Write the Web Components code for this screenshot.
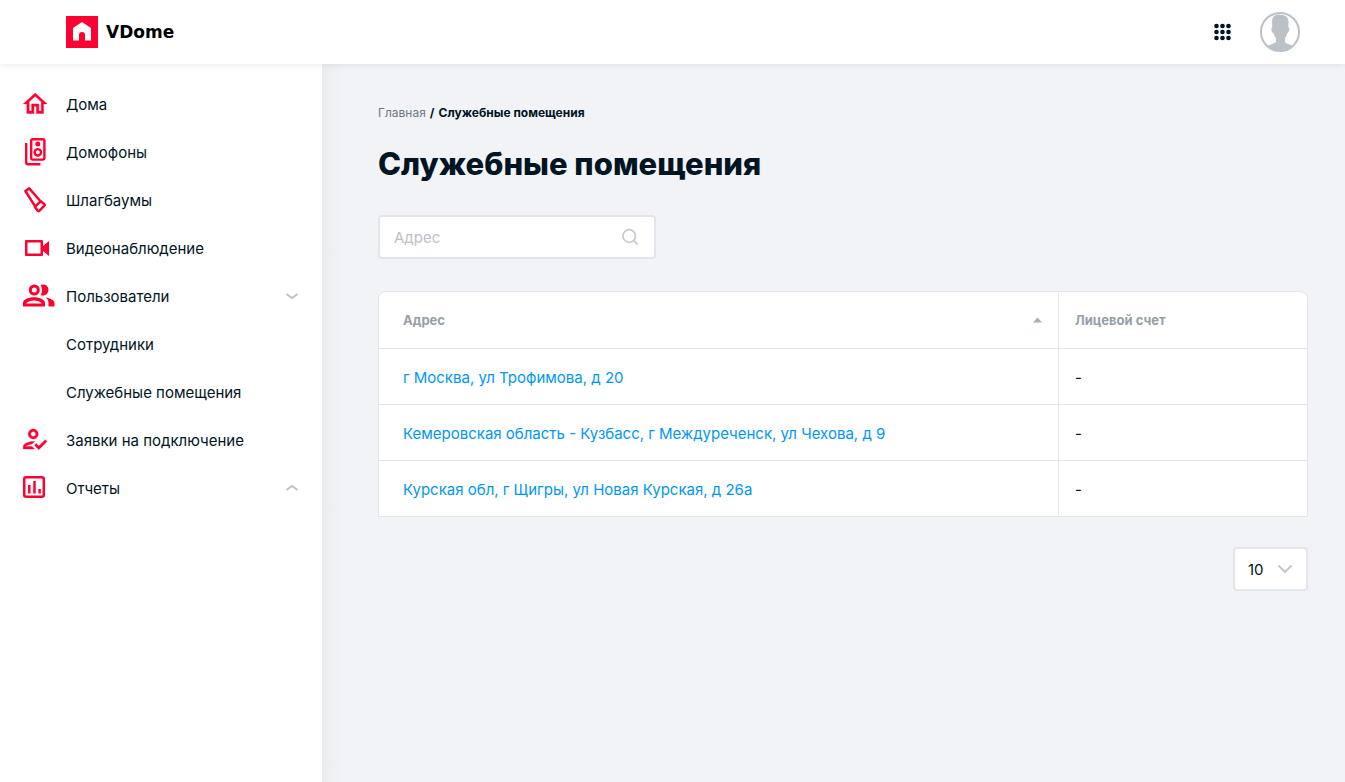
<!DOCTYPE html>
<html lang="ru">
<head>
<meta charset="utf-8">
<meta name="viewport" content="width=device-width, initial-scale=1">
<title>VDome — Служебные помещения</title>
<style>
  html { height: 100%; }
  body {
    margin: 0;
    min-height: 100%;
    display: flex;
    flex-direction: column;
    font-family: Inter, Roboto, sans-serif;
    font-size: 15px;
    line-height: 24px;
    color: #001424;
    --brand: #ff0032;
    --link: #0097f5;
    --line: #e2e5eb;
    --muted: #969fa8;
    --icon: #bbc1c7;
    background: #f1f3f7;
  }
</style>
</head>
<body>
<vd-app>
  <vd-header slot="header"></vd-header>
  <vd-sidebar slot="sidebar">
    <vd-nav-item label="Дома">
      <svg slot="icon" viewBox="0 0 32 32" width="32" height="32" fill="#ff0032" stroke="#ff0032" stroke-width=".3"><path transform="translate(-1.200 1.500) scale(1.200)" d="M12 5.69l5 4.5V18h-2v-6H9v6H7v-7.81l5-4.5M12 3L2 12h3v8h6v-6h2v6h6v-8h3L12 3z"/></svg>
    </vd-nav-item>
    <vd-nav-item label="Домофоны">
      <svg slot="icon" viewBox="0 0 32 32" width="32" height="32" fill="none" stroke="#ff0032" stroke-width="2.4"><rect x="9.2" y="3.2" width="13.2" height="20.4" rx="1.6"/><circle cx="15.8" cy="8" r="2.5" fill="#ff0032" stroke="none"/><circle cx="15.8" cy="16.3" r="3.2"/><path d="M4.2 7v19.6a1.6 1.6 0 0 0 1.6 1.6H18.4"/></svg>
    </vd-nav-item>
    <vd-nav-item label="Шлагбаумы">
      <svg slot="icon" viewBox="0 0 32 32" width="32" height="32" fill="none" stroke="#ff0032" stroke-width="2.5" stroke-linejoin="round"><path d="M18.3 17L7.2 4.4 3.4 7 13 22.2"/><path d="M12.9 22.8l5.9-5.6 3.7 3.2q.5.6 0 1.2l-5 5q-1.200.8-2 0z"/></svg>
    </vd-nav-item>
    <vd-nav-item label="Видеонаблюдение">
      <svg slot="icon" viewBox="0 0 32 32" width="32" height="32" fill="#ff0032"><path fill-rule="evenodd" d="M4 8h16q1 0 1 1v5l6-5v15l-6-5v4q0 1-1 1H4q-1 0-1-1V9q0-1 1-1zm1.500 2.500v11h13v-11z"/></svg>
    </vd-nav-item>
    <vd-nav-item label="Пользователи" toggle="down">
      <svg slot="icon" viewBox="0 0 34 32" width="34" height="32" fill="#ff0032"><circle cx="12.300" cy="10" r="4" fill="none" stroke="#ff0032" stroke-width="3"/><path d="M18.500 4.700q7.500-1.200 8 5.300-.5 6.500-8 5.300 3.300-5.300 0-10.600z"/><path fill-rule="evenodd" d="M1 26.500v-3.500c0-4 7-5.700 11-5.700s11 1.700 11 5.700v3.500zm3.200-3h15.600c-1.400-1.700-4.800-3-7.800-3s-6.400 1.300-7.800 3z"/><path d="M23.500 17.600c4.500.7 9 2.500 9 5.400v3.500h-6V23c0-2.300-1-4-3-5.400z"/></svg>
    </vd-nav-item>
    <vd-nav-item label="Сотрудники"></vd-nav-item>
    <vd-nav-item label="Служебные помещения"></vd-nav-item>
    <vd-nav-item label="Заявки на подключение">
      <svg slot="icon" viewBox="0 0 32 32" width="32" height="32" fill="#ff0032" stroke="#ff0032" stroke-width=".3"><path transform="translate(-2.500 0) scale(1.250)" d="M11 12c2.210 0 4-1.790 4-4s-1.790-4-4-4-4 1.790-4 4 1.790 4 4 4zm0-6c1.100 0 2 .9 2 2s-.9 2-2 2-2-.9-2-2 .9-2 2-2zM5 18c.2-.63 2.570-1.680 4.960-1.940l2.040-2c-.39-.04-.68-.06-1-.06-2.670 0-8 1.340-8 4v2h9l-2-2H5zm15.600-5.500l-5.130 5.170-2.070-2.080L12 17l3.470 3.500L22 13.910z"/></svg>
    </vd-nav-item>
    <vd-nav-item label="Отчеты" toggle="up">
      <svg slot="icon" viewBox="0 0 32 32" width="32" height="32" fill="none" stroke="#ff0032" stroke-width="2.500"><rect x="2.200" y="5.200" width="19.600" height="19.600" rx="2"/><path d="M7.300 13v8.600M12.500 9v12.600M17.600 17v4.600"/></svg>
    </vd-nav-item>
  </vd-sidebar>
  <vd-breadcrumbs></vd-breadcrumbs>
  <vd-title>Служебные помещения</vd-title>
  <vd-search></vd-search>
  <vd-table></vd-table>
  <vd-page-size></vd-page-size>
</vd-app>

<script>
const define = (name, html, setup) => {
  const tpl = document.createElement('template');
  tpl.innerHTML = html;
  customElements.define(name, class extends HTMLElement {
    constructor() {
      super();
      this.attachShadow({ mode: 'open' }).append(tpl.content.cloneNode(true));
    }
    connectedCallback() { if (setup) setup(this, this.shadowRoot); }
  });
};

define('vd-app', `
  <style>
    :host { display: flex; flex-direction: column; flex: 1; }
    .body { display: flex; flex: 1; }
    main {
      flex: 1; min-width: 0; box-sizing: border-box;
      padding: 41px 37px 40px 56px;
      display: flex; flex-direction: column; align-items: flex-start;
      background: linear-gradient(90deg, #e9ecf1, #f1f3f7 20px);
    }
  </style>
  <slot name="header"></slot>
  <div class="body"><slot name="sidebar"></slot><main><slot></slot></main></div>`);

define('vd-header', `
  <style>
    :host {
      display: flex; align-items: center; justify-content: space-between;
      height: 64px; padding: 0 45px 0 66px; background: #fff; position: relative;
      box-shadow: 0 0 8px rgba(0, 20, 36, .1);
    }
    a { display: flex; align-items: center; gap: 8px; color: #000; text-decoration: none;
      font: bold 17px/24px "DejaVu Sans", sans-serif; }
    .tools { display: flex; align-items: center; gap: 25px; }
    button { border: 0; padding: 0; background: none; display: block; cursor: pointer; }
    svg { display: block; }
  </style>
  <a href="#"><svg width="32" height="32" viewBox="0 0 32 32"><path fill="#ff0032" d="M0 0h32v32H0z"/><path fill="#fff" d="M16 6l9 6v12.500h-6V19q0-3-3-3t-3 3v5.500H7V12z"/></svg><span>VDome</span></a>
  <div class="tools">
    <button aria-label="Приложения"><svg width="24" height="24" viewBox="0 0 24 24" fill="#001424"><g id="r"><circle cx="5.500" cy="6" r="2.300"/><circle cx="11.500" cy="6" r="2.300"/><circle cx="17.500" cy="6" r="2.300"/></g><use href="#r" y="6"/><use href="#r" y="12"/></svg></button>
    <button aria-label="Профиль"><svg width="40" height="40" viewBox="0 0 40 40"><circle cx="20" cy="20" r="19" fill="#fff" stroke="#bbc1c7" stroke-width="2"/><path fill="#bbc1c7" d="M12 10Q12 3 18 2.500Q28.500 2 28.500 10L28.300 15Q30 15.500 29 19Q28.500 21 27.300 21Q26.500 24 25 26V30Q27 32 32.500 33.500Q27 38.500 20 38.500T7.500 33.500Q14 32 16 30V26Q14 24 13.500 21Q12 21 11.500 18.500Q11 16 12.300 15.500z"/></svg></button>
  </div>`);

define('vd-sidebar', `
  <style>
    :host { display: block; width: 322px; flex: none; box-sizing: border-box; background: #fff; padding-top: 16px; }
    nav { display: flex; flex-direction: column; }
  </style>
  <nav aria-label="Меню"><slot></slot></nav>`);

define('vd-nav-item', `
  <style>
    :host { display: block; }
    .row {
      display: grid; grid-template-columns: 44px 1fr 16px; align-items: center;
      width: 100%; height: 48px; box-sizing: border-box; padding: 0 22px;
      border: 0; background: none; color: inherit; font: inherit; text-align: left;
      text-decoration: none; cursor: pointer;
    }
    .icon { display: flex; }
    .label { padding-top: 2px; }
    svg { display: block; }
  </style>`, (host, root) => {
    if (root.querySelector('.row')) return;
    const dir = host.getAttribute('toggle');
    const row = document.createElement(dir ? 'button' : 'a');
    row.className = 'row';
    if (!dir) row.href = '#';
    row.innerHTML = '<span class="icon"><slot name="icon"></slot></span><span class="label"></span>' +
      (dir ? `<svg width="16" height="16" viewBox="0 0 16 16" fill="none" stroke="#bbc1c7" stroke-width="2"><path d="${dir === 'down' ? 'M2.500 6l5.500 4 5.500-4' : 'M2.500 10l5.500-4 5.500 4'}"/></svg>` : '');
    row.querySelector('.label').textContent = host.getAttribute('label');
    root.append(row);
  });

define('vd-breadcrumbs', `
  <style>
    :host { display: block; font-size: 12px; line-height: 16px; font-weight: 700; }
    nav { display: flex; gap: 4px; }
    a { color: #6e7782; font-weight: 400; text-decoration: none; }
  </style>
  <nav aria-label="Путь"><a href="#">Главная</a><span>/</span><span>Служебные помещения</span></nav>`);

define('vd-title', `
  <style>
    :host { display: block; margin-top: 23px; }
    h1 { margin: 0; font-size: 31px; line-height: 40px; font-weight: 800; }
  </style>
  <h1><slot></slot></h1>`);

define('vd-search', `
  <style>
    :host { display: block; width: 278px; margin-top: 31px; }
    label {
      display: flex; align-items: center; height: 44px; box-sizing: border-box;
      padding: 0 14px; border: 2px solid var(--line); border-radius: 4px; background: #fff;
    }
    input { flex: 1; min-width: 0; border: 0; padding: 2px 0 0; outline: 0; background: none; font: inherit; color: inherit; }
    input::placeholder { color: #bbc1c7; opacity: 1; }
  </style>
  <label><input type="text" placeholder="Адрес" aria-label="Адрес"><svg width="20" height="20" viewBox="0 0 20 20" fill="none" stroke="#c9cccf" stroke-width="1.800"><circle cx="9.200" cy="9" r="6.300"/><path d="M13.700 13.500l4 4"/></svg></label>`);

define('vd-table', `
  <style>
    :host { display: block; width: 100%; margin-top: 32px; }
    table {
      width: 100%; table-layout: fixed; border-collapse: separate; border-spacing: 0;
      background: #fff; border: 1px solid var(--line); border-radius: 8px 8px 0 0; box-sizing: border-box;
    }
    col.account { width: 248px; }
    th, td { box-sizing: border-box; padding: 0 16px; text-align: left; font-weight: 400; border-bottom: 1px solid var(--line); }
    th { height: 57px; font-size: 13px; font-weight: 700; color: var(--muted); }
    td { height: 56px; padding-top: 2px; }
    th:first-child, td:first-child { padding-left: 24px; border-right: 1px solid var(--line); }
    tr:last-child td { height: 55px; border-bottom: 0; }
    thead tr:last-child th { border-bottom: 1px solid var(--line); }
    .sort { display: flex; align-items: center; justify-content: space-between; width: 100%; border: 0; padding: 0; background: none; font: inherit; color: inherit; cursor: pointer; }
    a { color: var(--link); text-decoration: none; }
  </style>
  <table>
    <colgroup><col><col class="account"></colgroup>
    <thead><tr>
      <th aria-sort="ascending"><button class="sort"><span>Адрес</span><svg width="9" height="6" viewBox="0 0 9 6" fill="#a5adb5"><path d="M0 5.500L4.500 .5 9 5.500z"/></svg></button></th>
      <th>Лицевой счет</th>
    </tr></thead>
    <tbody></tbody>
  </table>`, (host, root) => {
    const body = root.querySelector('tbody');
    if (body.rows.length) return;
    for (const address of [
      'г Москва, ул Трофимова, д 20',
      'Кемеровская область - Кузбасс, г Междуреченск, ул Чехова, д 9',
      'Курская обл, г Щигры, ул Новая Курская, д 26а',
    ]) {
      const row = body.insertRow();
      const link = document.createElement('a');
      link.href = '#';
      link.textContent = address;
      row.insertCell().append(link);
      row.insertCell().textContent = '-';
    }
  });

define('vd-page-size', `
  <style>
    :host { display: grid; margin-top: 30px; align-self: flex-end; width: 75px; align-items: center; }
    select, svg { grid-area: 1 / 1; }
    select {
      appearance: none; width: 100%; height: 44px; box-sizing: border-box; margin: 0;
      padding: 2px 30px 0 13px; border: 2px solid var(--line); border-radius: 4px;
      background: #fff; font: inherit; color: inherit;
    }
    svg { justify-self: end; margin-right: 15px; pointer-events: none; }
  </style>
  <select aria-label="Строк на странице"><option>10</option><option>20</option><option>50</option></select>
  <svg width="16" height="16" viewBox="0 0 16 16" fill="none" stroke="#c3c8cd" stroke-width="2"><path d="M1.500 4.500l6.500 6.500 6.500-6.500"/></svg>`);
</script>
</body>
</html>
